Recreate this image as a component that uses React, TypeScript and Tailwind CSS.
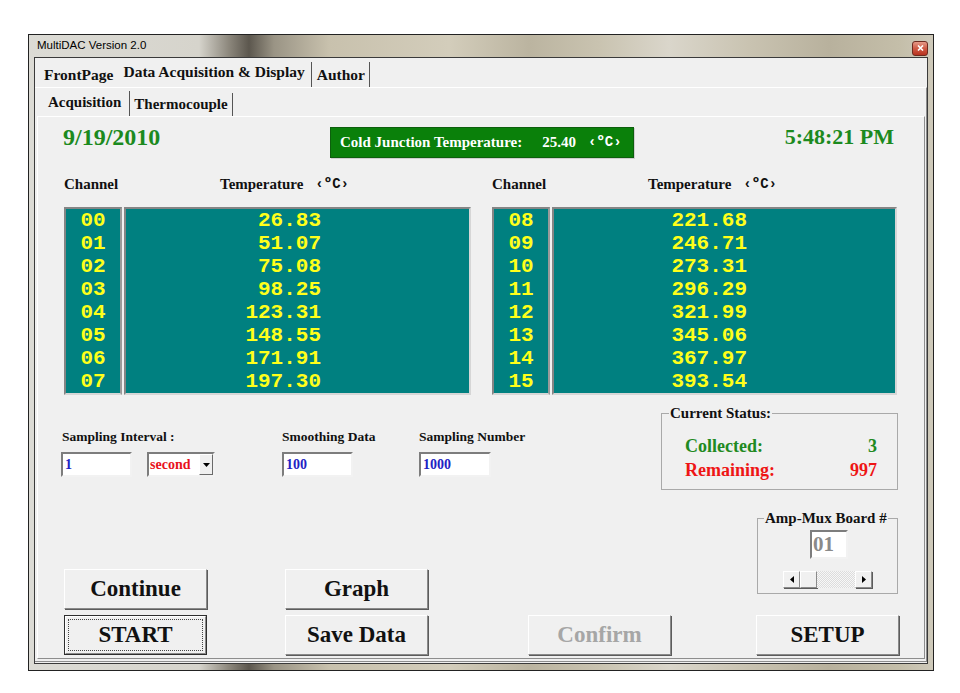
import React, { FC } from "react";

const serif = "font-['Liberation_Serif','Times_New_Roman',serif]";
const mono = "font-['Liberation_Mono','Courier_New',monospace]";

const leftRows = [
  ["00", "26.83"],
  ["01", "51.07"],
  ["02", "75.08"],
  ["03", "98.25"],
  ["04", "123.31"],
  ["05", "148.55"],
  ["06", "171.91"],
  ["07", "197.30"],
];

const rightRows = [
  ["08", "221.68"],
  ["09", "246.71"],
  ["10", "273.31"],
  ["11", "296.29"],
  ["12", "321.99"],
  ["13", "345.06"],
  ["14", "367.97"],
  ["15", "393.54"],
];

const Unit = () => (
  <span className={`${mono} ml-[12px] text-[14px] font-bold`}>‹ºC›</span>
);

type TableProps = {
  rows: string[][];
  width: string;
};

const ChannelTable: FC<TableProps> = ({ rows, width }) => (
  <div className={`${width} flex flex-col`}>
    <div className="flex h-[18px] items-center text-[15px] font-bold leading-[18px]">
      <span className="w-[156px]">Channel</span>
      <span>Temperature</span>
      <Unit />
    </div>
    <div className={`${mono} mt-[14px] flex h-[188px] gap-[2px] text-[21px] font-bold text-[#ffff1a]`}>
      <div className="w-[58px] border-2 border-t-[#858585] border-l-[#858585] border-r-[#9a9a9a] border-b-[#d6d6d6] bg-[#008080]">
        {rows.map((r) => (
          <div key={r[0]} className="h-[23px] text-center leading-[23px]">
            {r[0]}
          </div>
        ))}
      </div>
      <div className="flex-1 border-2 border-t-[#858585] border-l-[#858585] border-r-[#d6d6d6] border-b-[#d6d6d6] bg-[#008080] pr-[148px]">
        {rows.map((r) => (
          <div key={r[0]} className="h-[23px] text-right leading-[23px]">
            {r[1]}
          </div>
        ))}
      </div>
    </div>
  </div>
);

const TextBox: FC<{ value: string; width: string }> = ({ value, width }) => (
  <div
    className={`${width} h-[25px] border-2 border-t-[#7d7d7d] border-l-[#7d7d7d] border-r-[#f2f2f2] border-b-[#f2f2f2] bg-white pl-[2px] text-[14px] font-bold leading-[21px] text-[#2222c4]`}
  >
    {value}
  </div>
);

const Button: FC<{ label: string; disabled?: boolean }> = ({ label, disabled }) => (
  <div
    className={`flex h-[40px] w-[143px] items-center justify-center border border-t-white border-l-white border-r-[#8a8a8a] border-b-[#8a8a8a] bg-[#f0f0f0] shadow-[1px_1px_0_#5c5c5c] text-[23px] font-bold ${
      disabled ? "text-[#a6a6a6]" : "text-[#111]"
    }`}
  >
    {label}
  </div>
);

const ArrowBtn: FC<{ dir: "left" | "right" }> = ({ dir }) => (
  <div className="flex h-[17px] w-[17px] items-center justify-center border border-t-white border-l-white border-r-[#8a8a8a] border-b-[#8a8a8a] bg-[#f0f0f0] shadow-[1px_1px_0_#5c5c5c]">
    <svg width="4" height="7" viewBox="0 0 4 7">
      {dir === "left" ? (
        <path d="M4 0 L0 3.5 L4 7 Z" fill="#000" />
      ) : (
        <path d="M0 0 L4 3.5 L0 7 Z" fill="#000" />
      )}
    </svg>
  </div>
);

export default function App() {
  return (
    <div className={`${serif} min-h-screen bg-white pl-[28px] pt-[34px] text-[#111]`}>
      {/* window frame */}
      <div className="flex h-[637px] w-[906px] flex-col border border-[#222] bg-[linear-gradient(90deg,#dcdbd5_0px,#d6d4cc_170px,#8c877c_200px,#5c574e_220px,#9a9485_245px,#c8c1ad_300px,#d3cdbb_420px,#bbb4a0_500px,#c9c3b0_570px,#dad6cb_640px,#c9c3b1_720px,#b8b19d_800px,#c4bea9_870px,#cfcabb_906px)]">
        {/* title bar */}
        <div className="flex h-[22px] items-center justify-between pl-[8px] pr-[5px]">
          <span className="font-['Liberation_Sans',Arial,sans-serif] text-[11.5px] text-black">
            MultiDAC Version 2.0
          </span>
          <div className="mt-[4px] flex h-[15px] w-[16px] items-center justify-center rounded-[3px] border border-[#6d2a20] bg-[linear-gradient(180deg,#e59a88_0%,#cf5a45_50%,#b8321f_100%)]">
            <svg width="7" height="6" viewBox="0 0 7 6">
              <path d="M1 0.5 L6 5.5 M6 0.5 L1 5.5" stroke="#fff" strokeWidth="1.6" />
            </svg>
          </div>
        </div>

        {/* client area */}
        <div className="mx-[5px] mb-[6px] flex flex-1 flex-col border border-[#3a3a3a] bg-[#f0f0f0]">
          {/* top tabs */}
          <div className="flex h-[29px] items-start text-[15.5px] font-bold leading-[18px]">
            <div className="mt-[4px] h-[25px] pl-[9px] pr-[5px] pt-[4px]">FrontPage</div>
            <div className="mt-[4px] h-[25px] border-r border-r-[#555] pl-[5px] pr-[6px] pt-[1px]">
              Data Acquisition &amp; Display
            </div>
            <div className="mt-[4px] h-[25px] border-r border-r-[#555] pl-[5px] pr-[4px] pt-[4px]">
              Author
            </div>
          </div>

          <div className="mb-[1px] flex flex-1 flex-col border-t border-r border-b border-t-white border-r-[#8d8d8d] border-b-[#8d8d8d] pl-[2px] pr-[1px]">
            {/* sub tabs */}
            <div className="flex h-[28px] items-start text-[15px] font-bold leading-[18px]">
              <div className="mt-[3px] h-[25px] border-r border-r-[#555] pl-[11px] pr-[8px] pt-[2px]">
                Acquisition
              </div>
              <div className="mt-[5px] h-[23px] border-r border-r-[#555] pl-[4px] pr-[4px] pt-[2px]">
                Thermocouple
              </div>
            </div>

            {/* acquisition page */}
            <div className="mb-[2px] flex flex-1 flex-col border-t border-r border-b border-l border-t-white border-l-white border-r-[#8d8d8d] border-b-[#8d8d8d] pb-[3px] pl-[2px]">
              <div className="flex items-start pl-[23px] pr-[30px]">
                <div className="mt-[6px] w-[267px] text-[24px] font-bold leading-[28px] text-[#1c8a1e]">
                  9/19/2010
                </div>
                <div className="mt-[10px] flex h-[31px] w-[304px] items-center border border-[#0d5f0d] bg-[#0a800a] pl-[9px] text-[15px] font-bold text-white shadow-[1px_1px_0_#cfcfcf]">
                  <span>Cold Junction Temperature:</span>
                  <span className="ml-[20px]">25.40</span>
                  <span className={`${mono} ml-[12px] text-[14px] font-bold`}>‹ºC›</span>
                </div>
                <div className="mt-[7px] flex-1 text-right text-[22px] font-bold leading-[26px] text-[#1c8a1e]">
                  5:48:21 PM
                </div>
              </div>

              {/* channel readings */}
              <div className="ml-[24px] mt-[17px] flex gap-[21px]">
                <ChannelTable rows={leftRows} width="w-[407px]" />
                <ChannelTable rows={rightRows} width="w-[405px]" />
              </div>

              {/* sampling settings and status */}
              <div className="ml-[21px] mr-[26px] mt-[9px] flex items-start justify-between">
                <div className="mt-[24px] flex">
                  <div className="flex w-[221px] flex-col">
                    <span className="pl-[1px] text-[13.5px] font-bold leading-[17px]">Sampling Interval :</span>
                    <div className="mt-[7px] flex gap-[15px]">
                      <TextBox value="1" width="w-[71px]" />
                      <div className="flex h-[25px] w-[68px] border-2 border-t-[#7d7d7d] border-l-[#7d7d7d] border-r-[#f2f2f2] border-b-[#f2f2f2] bg-white">
                        <span className="flex-1 pl-[1px] text-[14px] font-bold leading-[21px] text-[#e8121c]">
                          second
                        </span>
                        <div className="flex w-[14px] items-center justify-center border border-t-white border-l-white border-r-[#6a6a6a] border-b-[#6a6a6a] bg-[#f0f0f0]">
                          <svg width="7" height="4" viewBox="0 0 7 4">
                            <path d="M0 0 L7 0 L3.5 4 Z" fill="#000" />
                          </svg>
                        </div>
                      </div>
                    </div>
                  </div>
                  <div className="flex w-[137px] flex-col">
                    <span className="text-[13.5px] font-bold leading-[17px]">Smoothing Data</span>
                    <div className="mt-[7px]">
                      <TextBox value="100" width="w-[71px]" />
                    </div>
                  </div>
                  <div className="flex flex-col">
                    <span className="text-[13.5px] font-bold leading-[17px]">Sampling Number</span>
                    <div className="mt-[7px]">
                      <TextBox value="1000" width="w-[72px]" />
                    </div>
                  </div>
                </div>

                <fieldset className="h-[86px] w-[237px] border border-[#a9a9a9]">
                  <legend className="ml-[7px] px-[1px] text-[15px] font-bold leading-[18px]">
                    Current Status:
                  </legend>
                  <div className="mt-[12px] pl-[23px] pr-[20px] text-[18px] font-bold leading-[24px]">
                    <div className="flex justify-between text-[#1f8a22]">
                      <span>Collected:</span>
                      <span>3</span>
                    </div>
                    <div className="flex justify-between text-[#ee1515]">
                      <span>Remaining:</span>
                      <span>997</span>
                    </div>
                  </div>
                </fieldset>
              </div>

              {/* command buttons */}
              <div className="ml-[24px] mr-[25px] mt-auto flex items-end justify-between">
                <div className="flex items-end">
                  <div className="flex flex-col gap-[6px]">
                    <Button label="Continue" />
                    <div className="h-[40px] w-[143px] border border-[#2e2e2e] bg-[#f0f0f0]">
                      <div className="flex h-full w-full items-center justify-center border border-t-white border-l-white border-r-[#8a8a8a] border-b-[#8a8a8a] p-[2px]">
                        <div className="flex h-full w-full items-center justify-center border border-dotted border-[#444] text-[23px] font-bold">
                          START
                        </div>
                      </div>
                    </div>
                  </div>
                  <div className="ml-[78px] flex flex-col gap-[6px]">
                    <Button label="Graph" />
                    <Button label="Save Data" />
                  </div>
                  <div className="ml-[100px]">
                    <Button label="Confirm" disabled />
                  </div>
                </div>

                <div className="flex flex-col items-end">
                  <fieldset className="mb-[21px] mr-[1px] h-[85px] w-[141px] border border-[#a9a9a9]">
                    <legend className="ml-[6px] px-[1px] text-[15px] font-bold leading-[18px]">
                      Amp-Mux Board #
                    </legend>
                    <div className="ml-[52px] mt-[3px] h-[29px] w-[38px] border-2 border-t-[#7d7d7d] border-l-[#7d7d7d] border-r-[#f2f2f2] border-b-[#f2f2f2] bg-white pl-[1px] text-[21px] font-bold leading-[25px] text-[#8a8a8a]">
                      01
                    </div>
                    <div className="ml-[25px] mt-[12px] flex h-[17px] w-[89px]">
                      <ArrowBtn dir="left" />
                      <div className="h-[17px] w-[17px] border border-t-white border-l-white border-r-[#8a8a8a] border-b-[#8a8a8a] bg-[#f0f0f0] shadow-[1px_1px_0_#5c5c5c]" />
                      <div className="h-[17px] flex-1 bg-[repeating-conic-gradient(#dcdcdc_0%_25%,#f7f7f7_0%_50%)] bg-[length:2px_2px]" />
                      <ArrowBtn dir="right" />
                    </div>
                  </fieldset>
                  <Button label="SETUP" />
                </div>
              </div>
            </div>
          </div>
        </div>
      </div>
    </div>
  );
}
